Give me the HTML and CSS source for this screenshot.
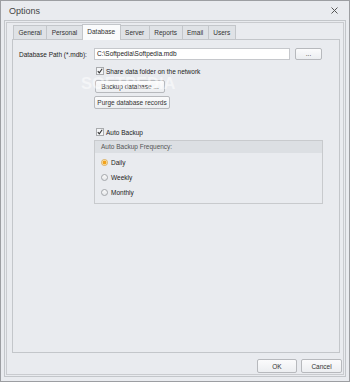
FILE: index.html
```
<!doctype html>
<html lang="en">
<head>
  <meta charset="UTF-8">
  <title>Options</title>
  <link rel="stylesheet" href="styles.css">
</head>
<body>

  <div class="window">

    <div class="titlebar">
      <span class="title">Options</span>
      <svg class="close" width="7" height="7" viewBox="0 0 7 7">
        <path d="M0.5 0.5 L6.5 6.5 M6.5 0.5 L0.5 6.5" stroke="#555" stroke-width="1" fill="none"/>
      </svg>
    </div>

    <div class="frame">

      <div class="tabs">
        <span class="tab">General</span>
        <span class="tab">Personal</span>
        <span class="tab active">Database</span>
        <span class="tab">Server</span>
        <span class="tab">Reports</span>
        <span class="tab">Email</span>
        <span class="tab">Users</span>
      </div>

      <div class="page">

        <div class="pathRow">
          <span class="pathLabel">Database Path (*.mdb):</span>
          <div class="input">C:\Softpedia\Softpedia.mdb</div>
          <button class="btn dots">...</button>
        </div>

        <div class="options">
          <div class="check">
            <span class="box"><svg width="6" height="6" viewBox="0 0 6 6"><path d="M0.8 3.2 L2.3 4.8 L5.2 0.8" stroke="#333" stroke-width="1.1" fill="none"/></svg></span>
            Share data folder on the network
          </div>
          <button class="btn backupBtn">Backup database ...</button>
          <button class="btn purgeBtn">Purge database records</button>

          <div class="check autoCheck">
            <span class="box"><svg width="6" height="6" viewBox="0 0 6 6"><path d="M0.8 3.2 L2.3 4.8 L5.2 0.8" stroke="#333" stroke-width="1.1" fill="none"/></svg></span>
            Auto Backup
          </div>

          <div class="group">
            <div class="groupHead">Auto Backup Frequency:</div>
            <div class="groupBody">
              <div class="radio"><span class="dot on"></span>Daily</div>
              <div class="radio"><span class="dot"></span>Weekly</div>
              <div class="radio"><span class="dot"></span>Monthly</div>
            </div>
          </div>
        </div>

      </div>

      <div class="buttons">
        <button class="btn okBtn">OK</button>
        <button class="btn cancelBtn">Cancel</button>
      </div>

    </div>

    <span class="watermark">SOFTPEDIA</span>

  </div>

</body>
</html>
```

FILE: styles.css
```
html, body {
  margin: 0px;
  padding: 0px;
}
body {
  font-family: "Liberation Sans", Arial, sans-serif;
  font-size: 6.5px;
  color: #222;
}

.window {
  width: 350px;
  height: 382px;
  box-sizing: border-box;
  border: 1px solid #9c9ea2;
  background-color: #e9ebef;
  display: flex;
  flex-direction: column;
  position: relative;
  overflow: hidden;
}

.titlebar {
  height: 19px;
  display: flex;
  align-items: center;
  justify-content: space-between;
  padding: 0 11px 0 8px;
}
.title {
  font-size: 9px;
  color: #444;
}

/* outer double line round the whole dialog body */
.frame {
  flex: 1;
  margin: 0 3px 4px 3px;
  border: 1px solid #c3c6ca;
  box-shadow: inset 0 0 0 1px #e9ebef, inset 0 0 0 2px #c9cbcf;
  display: flex;
  flex-direction: column;
  padding: 4px 3px 3px 7px;
}

.tabs {
  display: flex;
  align-items: flex-end;
  height: 14px;
  padding-left: 2px;
}
.tab {
  height: 14px;
  box-sizing: border-box;
  border: 1px solid #c3c6ca;
  border-bottom: none;
  background-color: #dfe2e6;
  padding: 0 4.5px;
  line-height: 13px;
  color: #333;
  margin-left: -1px;
}
.tab.active {
  height: 16px;
  margin-bottom: -1px;
  background-color: #fafbfc;
  position: relative;
  z-index: 1;
  line-height: 14px;
}

.page {
  flex: 1;
  border: 1px solid #c3c6ca;
  background-color: #e9ebef;
  margin-right: 2px;
  padding: 8px 0 0 6px;
}

.pathRow {
  display: flex;
  align-items: center;
  height: 12px;
}
.pathLabel {
  width: 75px;
}
.input {
  width: 196px;
  height: 12px;
  box-sizing: border-box;
  border: 1px solid #c6c8cc;
  background-color: #fff;
  padding-left: 2px;
  line-height: 10px;
  color: #1a1a1a;
}

.btn {
  font-family: inherit;
  font-size: 6.5px;
  color: #333;
  height: 13px;
  box-sizing: border-box;
  border: 1px solid #b7b9bd;
  border-radius: 2px;
  background: linear-gradient(#fbfbfc, #eceef1);
  padding: 0;
}
.dots {
  width: 27px;
  height: 12px;
  margin-left: 5px;
  line-height: 8px;
}

.options {
  margin-left: 75px;
  margin-top: 6px;
  display: flex;
  flex-direction: column;
  align-items: flex-start;
}
.check {
  display: flex;
  align-items: center;
  height: 10px;
  gap: 2px;
}
.box {
  width: 8px;
  height: 8px;
  box-sizing: border-box;
  border: 1px solid #a9abae;
  background-color: #f4f5f7;
  margin-left: 2px;
  display: flex;
  align-items: center;
  justify-content: center;
}
.backupBtn {
  margin-top: 4px;
  margin-left: 1px;
  width: 70px;
}
.purgeBtn {
  margin-top: 3px;
  width: 76px;
}
.autoCheck {
  margin-top: 18px;
}

.group {
  margin-top: 3px;
  width: 227px;
  border: 1px solid #c8cacd;
}
.groupHead {
  height: 12px;
  line-height: 12px;
  background-color: #dcdfe3;
  padding-left: 6px;
  color: #555;
}
.groupBody {
  padding: 2px 0 3px 6px;
}
.radio {
  display: flex;
  align-items: center;
  height: 15px;
  gap: 3px;
}
.dot {
  width: 7px;
  height: 7px;
  box-sizing: border-box;
  border-radius: 50%;
  border: 1px solid #a3a6aa;
  background: linear-gradient(#fafafa, #e4e6e9);
}
.dot.on {
  border-color: #dcae5a;
  background: radial-gradient(circle, #f2a21c 0 1.6px, #fde9b8 2.2px);
}

.buttons {
  display: flex;
  justify-content: flex-end;
  gap: 4px;
  margin-top: 6px;
}
.okBtn {
  width: 40px;
  height: 14px;
}
.cancelBtn {
  width: 41px;
  height: 14px;
}

/* faint site watermark lying over the buttons */
.watermark {
  position: absolute;
  left: 80px;
  top: 73px;
  font-size: 16.5px;
  font-weight: bold;
  color: rgba(255, 255, 255, 0.5);
  pointer-events: none;
}
```
